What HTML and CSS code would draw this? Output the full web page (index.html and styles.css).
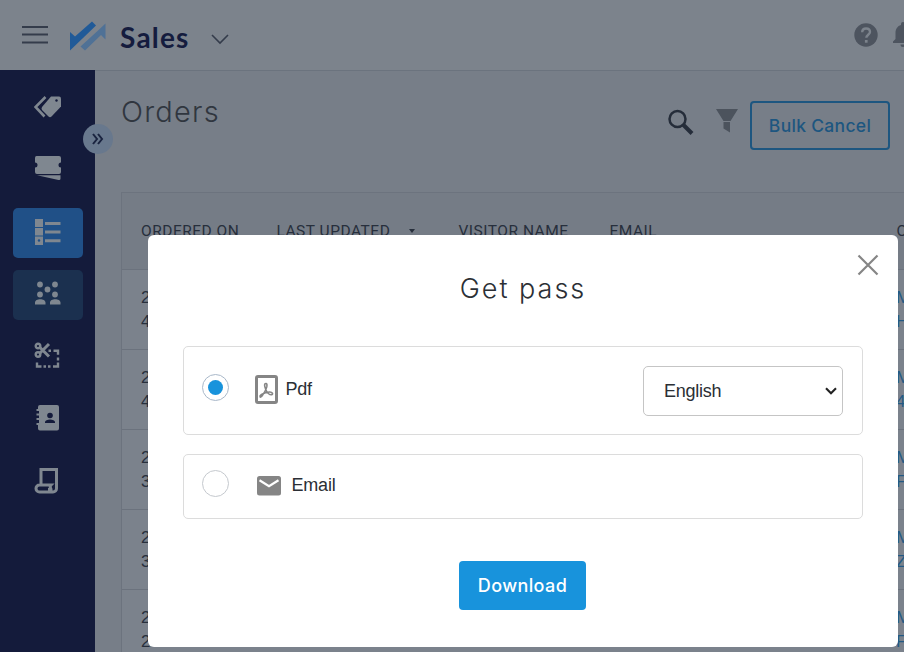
FILE: index.html
```html
<!DOCTYPE html>
<html lang="en">
<head>
<meta charset="utf-8">
<title>Sales - Orders</title>
<link rel="stylesheet" href="styles.css">
</head>
<body>
<div class="app">
  <header class="topbar">
    <svg class="burger" width="26" height="20" viewBox="0 0 26 20"><path d="M0 2h26M0 9.500h26M0 17.500h26"/></svg>
    <svg class="logo" width="36" height="30" viewBox="0 0 36 30"><path class="logo-dark" d="M0 11L5 15.500 22 .5 26 4.500 0 29.500z"/><path class="logo-light" d="M35.500 2.500V18.500L31 14 15 29.500 10.500 25.500 27.500 10z"/></svg>
    <span class="brand">Sales</span>
    <svg class="caret" width="18" height="11" viewBox="0 0 18 11"><path d="M1 1l8 8 8-8"/></svg>
    <svg class="help" width="24" height="24" viewBox="0 0 24 24"><circle cx="12" cy="12" r="11.700"/><path d="M8.200 9.300c0-2.300 1.600-3.800 3.900-3.800s3.900 1.400 3.900 3.500c0 2.600-3.700 2.900-3.700 5.800"/><rect x="10.900" y="17" width="2.700" height="2.700"/></svg>
    <svg class="bell" width="24" height="26" viewBox="0 0 24 26"><path d="M2 21v-1.500L4.500 17V11c0-4 2-7 5.500-8V2a2 2 0 0 1 4 0v1c3.500 1 5.500 4 5.500 8v6l2.500 2.500V21zM9.500 22.500h5a2.500 2.500 0 0 1-5 0z"/></svg>
  </header>
  <div class="body">
    <nav class="sidebar">
      <a class="item"><svg width="28" height="28" viewBox="0 0 28 28"><path d="M17 3.500h8q2 0 2 2v8L17.500 23.500q-1.500 1.500-3 0L8 17q-1-1.500 0-3z"/><path class="line" d="M11.500 4L1.500 14 10.500 23.500"/><circle class="hole" cx="22.500" cy="7.500" r="1.200"/></svg></a>
      <a class="item"><svg width="28" height="28" viewBox="0 0 28 28"><path d="M2.500 1h22.500q2 0 2 2v4.500a2.500 2.500 0 0 0 0 5V17q0 2-2 2H3q-2 0-2-2v-4.500a2.500 2.500 0 0 0 0-5V3q0-2 1.500-2zM3 20.300h23.500v3.500q0 1.500-2 1.200z"/></svg></a>
      <a class="item active"><svg width="28" height="28" viewBox="0 0 28 28"><path d="M1 1h8v8H1zM1 10h8v7.500H1zM1 18.500h8v8.500H1zM11 4H26.500v3H11zM11 12.500H26.500v3H11zM11 21.300H26.500v3H11z"/><circle class="dot" cx="5" cy="22.500" r="1.200"/></svg></a>
      <a class="item soft"><svg width="28" height="28" viewBox="0 0 28 28"><circle cx="6" cy="4.500" r="2.900"/><circle cx="21" cy="4.500" r="2.900"/><circle cx="13.500" cy="9.500" r="2.900"/><circle cx="6" cy="14.500" r="2.900"/><circle cx="21" cy="14.500" r="2.900"/><path d="M1 24.500v-2c0-4.500 10.500-4.500 10.500 0v2zM16 24.500v-2c0-4.500 10.500-4.500 10.500 0v2z"/></svg></a>
      <a class="item"><svg width="28" height="28" viewBox="0 0 28 28"><g class="thin"><circle cx="4" cy="4" r="2.300"/><circle cx="4" cy="12.500" r="2.300"/><path class="blade" d="M6 5.500L15 14.500M6 11L15 2"/><path d="M14.500 8.700h2.500M19.500 8.700h4.500v4M24 15.500v3M3 20.500v4h4.500M9.500 24.500h2.500M14 24.500h2.500M19 24.500h5v-4"/></g></svg></a>
      <a class="item"><svg width="28" height="28" viewBox="0 0 28 28"><path d="M6 1h17q2 0 2 2v21.500q0 2-2 2H6q-2 0-2-2V21H2.500v-2H5v-3H2.500v-2H5v-2.500H2.500v-2H5V7H2.500V5H4V3q0-2 2-2z"/><circle class="cut" cx="16" cy="11.500" r="2.800"/><path class="cut" d="M11 19v-1c0-3.500 10-3.500 10 0v1z"/></svg></a>
      <a class="item"><svg width="28" height="28" viewBox="0 0 28 28"><path class="scroll" d="M7 17V2.500h15.500v19a3.500 3.500 0 0 1-3.500 3.500H5.500a3.200 3.200 0 0 1 0-7H17c-2 2 0 3 0 4.500H14"/></svg></a>
    </nav>
    <main class="main">
      <div class="heading">
        <h1>Orders</h1>
        <svg class="search" width="26" height="27" viewBox="0 0 26 27"><circle cx="9.500" cy="10" r="8"/><path d="M15 15.500l9 9"/></svg>
        <svg class="filter" width="22" height="24" viewBox="0 0 22 24"><path d="M0 0h22l-7.500 12h-7zM7.500 13h6.500v10.500l-6.500-4z"/></svg>
        <button class="bulk">Bulk Cancel</button>
      </div>
      <div class="table">
        <div class="row head"><span>ORDERED ON</span><span>LAST UPDATED<i class="sort"></i></span><span>VISITOR NAME</span><span>EMAIL</span><span>O</span></div>
        <div class="row"><span>2<br>4</span><span class="link">M<br>H</span></div>
        <div class="row"><span>2<br>4</span><span class="link">M<br>4</span></div>
        <div class="row"><span>2<br>3</span><span class="link">M<br>F</span></div>
        <div class="row"><span>2<br>3</span><span class="link">M<br>Z</span></div>
        <div class="row"><span>2<br>2</span><span class="link">M<br>F</span></div>
      </div>
    </main>
  </div>
  <div class="expand"><svg width="12" height="12" viewBox="0 0 12 12"><path d="M1 1l4 5-4 5M6 1l4 5-4 5"/></svg></div>
  <section class="modal">
    <svg class="close" width="22" height="22" viewBox="0 0 22 22"><path d="M1.500 1.500l19 19M20.500 1.500l-19 19"/></svg>
    <h2>Get pass</h2>
    <div class="option pdf">
      <i class="radio on"></i>
      <svg class="pdficon" width="23" height="29" viewBox="0 0 23 29"><rect x="1.500" y="1.500" width="20" height="26" rx="1.500"/><path class="mark" d="M11 8.500c-2.500 0-1 4 0 6.500s3.500 5 5.500 4.800 1-3-2-2.800-5.500 1-8 2.500-1.500 4 .5 1.500 4-6 4.800-9.300c.3-2 .2-3.200-.8-3.200z"/></svg>
      <span class="label">Pdf</span>
      <div class="select"><span>English</span><svg width="12" height="8" viewBox="0 0 12 8"><path d="M1 1.300l5 5 5-5"/></svg></div>
    </div>
    <div class="option email">
      <i class="radio"></i>
      <svg class="mail" width="24" height="20" viewBox="0 0 24 20"><rect width="24" height="19.500" rx="2.500"/><path d="M2.500 4.300l9.500 5.900 9.500-5.900"/></svg>
      <span class="label">Email</span>
    </div>
    <button class="download">Download</button>
  </section>
</div>
</body>
</html>
```
FILE: styles.css
```css
* { box-sizing: border-box; }
body { margin: 0; font-family: "Liberation Sans", Arial, sans-serif; }
svg { display: block; flex: none; fill: none; }
h1, h2 { margin: 0; font-weight: 300; font-family: Inter, sans-serif; }
button { font-family: Inter, sans-serif; border-radius: 4px; padding: 0; white-space: nowrap; }
.app { position: relative; width: 904px; height: 652px; overflow: hidden; background: #777e88; }
.topbar { display: flex; align-items: flex-start; height: 71px; background: #7c838c; border-bottom: 1px solid #6b737e; }
.burger { margin: 25px 0 0 22px; stroke: #343c4b; stroke-width: 2.2; }
.logo { margin: 21px 0 0 22px; }
.logo-dark { fill: #205a98; }
.logo-light { fill: #4f7196; }
.brand { margin: 17px 0 0 14px; width: 70px; font: 700 28px/40px Lato, sans-serif; letter-spacing: 1.200px; color: #151c3e; }
.caret { margin: 34px 0 0 21.500px; stroke: #343c4b; stroke-width: 1.6; }
.help { margin: 22.500px 0 0 624.500px; }
.help circle, .help rect { fill: #4d545f; }
.help path { stroke: #7c838c; stroke-width: 2.4; }
.help rect { fill: #7c838c; }
.bell { margin: 22px 0 0 13px; fill: #4d545f; }
.body { display: flex; height: 582px; margin-top: -1px; }
.sidebar { flex: none; width: 95px; padding: 13px 12px 0 13px; background: #141b3b; display: flex; flex-direction: column; gap: 12.300px; }
.item { height: 50px; flex: none; display: flex; align-items: center; justify-content: center; border-radius: 5px; }
.item svg { fill: #7f8790; margin: -2px 0 0 -1px; }
.item .line { fill: none; stroke: #7f8790; stroke-width: 2.6; }
.item .hole, .item .cut { fill: #141b3b; }
.item .dot { fill: #205087; }
.item .thin { fill: none; stroke: #7f8790; stroke-width: 2.4; }
.item .blade { stroke-width: 3; }
.item .scroll { fill: none; stroke: #7f8790; stroke-width: 3; }
.active { background: #205087; }
.soft { background: #1b304f; }
.main { flex: 1; min-width: 0; padding: 1px 0 0 26px; }
.heading { display: flex; align-items: flex-start; height: 121px; }
h1 { width: 547px; padding-top: 22px; font-size: 29px; line-height: 38px; letter-spacing: 1.200px; color: #30363f; }
.search { margin-top: 38px; stroke: #252d3a; stroke-width: 2.5; }
.search path { stroke-width: 4; }
.filter { margin: 38px 0 0 22px; fill: #4c535d; }
.bulk { margin: 30px 0 0 12px; width: 140px; height: 49px; border: 2px solid #1d5680; background: none; color: #1d5680; font-size: 17.500px; font-weight: 500; letter-spacing: .3px; }
.table { width: 850px; border: 1px solid #6c737e; border-bottom: 0; background: #7b828c; }
.row { display: grid; grid-template-columns: 755px 1fr; height: 80px; padding: 16px 0 0 19px; border-bottom: 1px solid #6b727d; font-size: 17px; line-height: 24px; color: #272f3c; }
.head { grid-template-columns: 135.500px 182px 151px 287px 1fr; height: 77px; padding-top: 25.500px; background: #757c86; font: 400 15.500px/24px Roboto, sans-serif; letter-spacing: .5px; }
.link { color: #235a85; }
.sort { display: inline-block; margin: 0 0 3px 19px; border: 3.500px solid transparent; border-top: 4px solid #272f3c; border-bottom: 0; }
.expand { position: absolute; left: 83px; top: 124px; width: 30px; height: 30px; border-radius: 50%; background: #68788d; display: flex; align-items: center; justify-content: center; }
.expand path { stroke: #1a2440; stroke-width: 2; }
.modal { position: absolute; left: 148px; top: 235px; width: 750px; height: 412px; border-radius: 6px; background: #fff; padding: 34px 35px 0; display: flex; flex-direction: column; align-items: center; }
.close { position: absolute; right: 19px; top: 19px; stroke: #858585; stroke-width: 2.2; }
h2 { font-size: 27px; line-height: 40px; letter-spacing: 2px; color: #2b2f35; }
.option { display: flex; align-items: center; width: 680px; border: 1px solid #dcdcdc; border-radius: 5px; padding: 0 19px 0 18px; }
.pdf { height: 89px; margin-top: 37px; }
.email { height: 65px; margin-top: 19px; }
.radio { width: 27px; height: 27px; border: 1px solid #c5c9ce; border-radius: 50%; display: flex; align-items: center; justify-content: center; margin-top: -7px; }
.on { border-color: #a9b8c9; }
.on::after { content: ""; width: 15px; height: 15px; border-radius: 50%; background: #1893dc; }
.pdficon { margin: -2px 0 0 25.500px; stroke: #858585; stroke-width: 3; }
.pdficon .mark { stroke-width: 1.6; }
.mail { margin: -2px 0 0 28px; fill: #858585; }
.mail path { fill: none; stroke: #fff; stroke-width: 2.2; }
.label { margin: -3px 0 0 8px; font-size: 18px; line-height: 24px; color: #2b2f35; letter-spacing: -.2px; }
.email .label { margin-left: 10.500px; }
.select { margin-left: auto; width: 200px; height: 50px; border: 1px solid #c5c5c5; border-radius: 5px; padding: 0 5px 0 20px; display: flex; align-items: center; justify-content: space-between; font-size: 18px; letter-spacing: -.25px; color: #2b2f35; }
.select span { padding-top: 1px; }
.select path { stroke: #222; stroke-width: 2.1; }
.download { width: 127px; height: 49px; margin: 42px 1px 0 0; border: 0; background: #1893dc; color: #fff; font-size: 18px; font-weight: 500; letter-spacing: .4px; }
```
